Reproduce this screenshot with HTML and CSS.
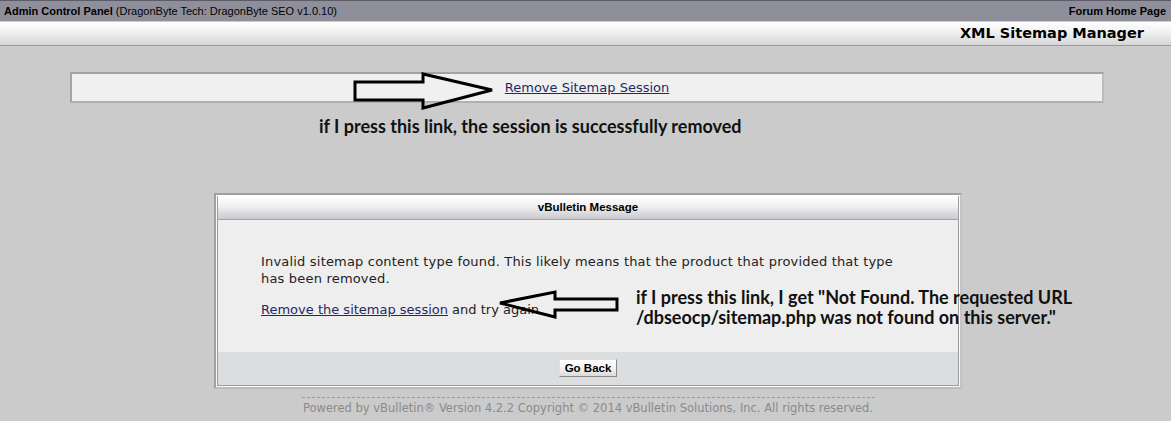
FILE: index.html
```html
<!DOCTYPE html>
<html lang="en">
<head>
  <meta charset="UTF-8" />
  <title>XML Sitemap Manager</title>
  <link rel="stylesheet" href="styles.css">
</head>
<body>

  <div class="page">
    <!-- top navigation -->
    <div class="topbar">
      <div><b>Admin Control Panel</b> <span class="product">(DragonByte Tech: DragonByte SEO v1.0.10)</span></div>
      <a class="home-link">Forum Home Page</a>
    </div>

    <div class="titlebar">XML Sitemap Manager</div>

    <div class="linkbox">
      <a class="plain-link">Remove Sitemap Session</a>
    </div>

    <div class="msg-wrap">
      <div class="msgbox">
        <div class="msg-inner">
          <div class="msg-head">vBulletin Message</div>
          <div class="msg-body">
            <p class="msg-text">Invalid sitemap content type found. This likely means that the product that provided that type has been removed.</p>
            <p><a class="plain-link">Remove the sitemap session</a> and try again.</p>
          </div>
          <div class="msg-foot">
            <button class="btn">Go Back</button>
          </div>
        </div>
      </div>
      <div class="copyright">Powered by vBulletin&reg; Version 4.2.2 Copyright &copy; 2014 vBulletin Solutions, Inc. All rights reserved.</div>
    </div>

    <!-- hand drawn notes on top of the screenshot -->
    <div class="note note-one">if I press this link, the session is successfully removed</div>
    <div class="note note-two">if I press this link, I get "Not Found. The requested URL<br>/dbseocp/sitemap.php was not found on this server."</div>

    <svg class="arrows" width="1171" height="421" viewBox="0 0 1171 421">
      <polygon points="355,82 423,82 423,74 492,90 423,108 423,100 355,100" />
      <polygon points="617,299 555,299 555,292 500,303 555,317 555,310 617,310" />
    </svg>
  </div>

</body>
</html>
```

FILE: styles.css
```css
body {
  margin: 0;
  background: #cbcbcb;
  font-family: "DejaVu Sans", Verdana, sans-serif;
  color: #222;
}

.page {
  position: relative;
  height: 421px;
  overflow: hidden;
}

.topbar {
  height: 20px;
  border-top: 1px solid #5c5c66;
  background: #8f8f9c;
  display: flex;
  justify-content: space-between;
  align-items: center;
  padding: 0 5px 0 4px;
  font-family: "Liberation Sans", Arial, sans-serif;
  font-size: 11px;
  color: #000;
}

.product {
  font-size: 11px;
}

.home-link {
  font-weight: bold;
  color: #000;
}

.titlebar {
  margin-top: 1px;
  height: 23px;
  line-height: 23px;
  background: linear-gradient(#ffffff, #f2f2f2 40%, #d6d6d6);
  border-bottom: 1px solid #9a9a9a;
  text-align: right;
  padding-right: 27px;
  font-size: 14.5px;
  font-weight: bold;
  color: #000;
}

.linkbox {
  margin: 26px 67px 0 70px;
  height: 27px;
  border: 2px solid #a3a3a3;
  border-right-color: #bdbdbd;
  border-bottom-color: #b0b0b0;
  background: #f0f0f0;
  display: flex;
  align-items: center;
  justify-content: center;
  font-size: 13px;
}

.plain-link {
  color: #1f2a66;
  text-decoration: underline;
}

.msg-wrap {
  width: 748px;
  margin: 90px 0 0 214px;
}

.msgbox {
  border: 2px solid #a0a0a0;
  border-right-color: #c4c4c4;
  border-bottom-color: #bcbcbc;
  padding: 1px;
  background: #fafafa;
}

.msg-inner {
  border: 1px solid #9c9c9c;
  border-top: none;
}

.msg-head {
  height: 23px;
  line-height: 23px;
  background: linear-gradient(#ffffff, #f0f0f2 45%, #c9c9ce);
  border-bottom: 1px solid #a4a4a8;
  text-align: center;
  font-family: "Liberation Sans", Arial, sans-serif;
  font-size: 11.5px;
  font-weight: bold;
  color: #000;
}

.msg-body {
  background: #eeeeee;
  padding: 33px 48px 23px 43px;
  font-size: 13px;
  line-height: 17px;
  height: 76px;
}

.msg-body p {
  margin: 0 0 14px;
}

.msg-text {
  letter-spacing: 0.19px;
}

.msg-foot {
  background: #dcdddf;
  height: 33px;
  display: flex;
  align-items: center;
  justify-content: center;
}

.btn {
  font-family: "Liberation Sans", Arial, sans-serif;
  font-size: 11.5px;
  font-weight: bold;
  color: #000;
  height: 18px;
  width: 58px;
  padding: 0;
  margin-top: -2px;
  background: linear-gradient(#ffffff, #f4f4f4 50%, #dadada);
  border: 1px solid #8a8a8a;
  border-top-color: #e0e0e0;
  border-left-color: #e0e0e0;
}

.copyright {
  width: 573px;
  margin: 8px auto 0;
  border-top: 1px dashed #9a9a9a;
  padding-top: 3px;
  text-align: center;
  font-size: 11.5px;
  color: #8a8a8a;
}

.note {
  position: absolute;
  font-family: Lato, "Open Sans", sans-serif;
  font-weight: bold;
  font-size: 18px;
  color: #111;
  white-space: nowrap;
}

.note-one {
  left: 319px;
  top: 115px;
}

.note-two {
  left: 636px;
  top: 287px;
  line-height: 20px;
}

.arrows {
  position: absolute;
  left: 0;
  top: 0;
  pointer-events: none;
}

.arrows polygon {
  fill: none;
  stroke: #000;
  stroke-width: 3;
  stroke-linejoin: miter;
}
```
